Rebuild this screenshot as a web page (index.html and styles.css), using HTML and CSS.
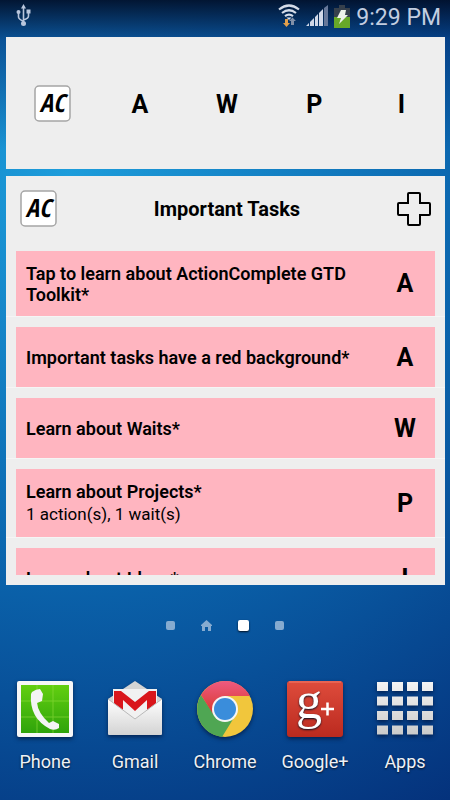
FILE: index.html
```
<!DOCTYPE html>
<html lang="en">
  <head>
    <title>Home screen</title>
    <meta charset="utf-8">
    <meta name="viewport" content="width=device-width, initial-scale=1.0">
    <link rel="stylesheet" href="styles.css">
  </head>
  <body>
    <header class="status-bar">
      <svg class="usb" width="16" height="24" viewBox="0 0 16 24" fill="none" stroke="#b9c6dc" stroke-width="1.6">
        <path d="M7.5 3v16M2.5 9v4q0 2 5 4.500M12.500 8v4q0 2.500-5 4"/>
        <g fill="#b9c6dc" stroke="none">
          <path d="M7.500 0l2.500 4.500h-5z"/>
          <circle cx="2.500" cy="8" r="2"/>
          <path d="M10.500 5.500h4v4h-4z"/>
          <circle cx="7.500" cy="19.500" r="2.500"/>
        </g>
      </svg>
      <div class="status-icons">
        <svg width="22" height="24" viewBox="0 0 22 24" fill="none" stroke="#d5dce8" stroke-width="2.200">
          <path d="M1 5.500q10-8 20 0M4 9q7-5.500 14 0M7 12.200q4-3 8 0"/>
          <path d="M8.500 13.500h5L11 16z" fill="#d5dce8" stroke="none"/>
          <path d="M7 15h3v4h2l-3.500 4L5 19h2z" fill="#e3a04c" stroke="none"/>
          <path d="M13 21h3v-4h2l-3.500-3.500L11 17h2z" fill="#8190a8" stroke="none"/>
        </svg>
        <svg width="22" height="22" viewBox="0 0 22 22" fill="#d0d8e8">
          <path d="M0 21l3-3v3zM4 17l4-4v8H4zM9 12l3-3v12H9zM13 8l4-4v17h-4z"/>
          <path d="M18 3l4-3v21h-4z" fill="#66789a"/>
        </svg>
        <svg width="16" height="23" viewBox="0 0 16 23">
          <path d="M0 3h5V0h6v3h5v10H0z" fill="#36404c"/>
          <path d="M0 12h16v11H0z" fill="#67a828"/>
          <path d="M7 5h5l-1 5h3L5 19l2-6H3z" fill="#eef2ea"/>
        </svg>
        <span class="clock">9:29 PM</span>
      </div>
    </header>

    <main>
      <nav class="widget shortcuts">
        <button class="logo" aria-label="ActionComplete">
          <svg width="37" height="37" viewBox="0 0 37 37">
            <rect x="1" y="1" width="35" height="35" rx="4" fill="#fff" stroke="#a5a5a5" stroke-width="1.500"/>
            <text x="18" y="27" text-anchor="middle" class="logo-text">AC</text>
          </svg>
        </button>
        <button class="letter">A</button>
        <button class="letter">W</button>
        <button class="letter">P</button>
        <button class="letter">I</button>
      </nav>

      <section class="widget tasks">
        <div class="tasks-head">
          <button class="logo" aria-label="ActionComplete">
            <svg width="37" height="37" viewBox="0 0 37 37">
              <rect x="1" y="1" width="35" height="35" rx="4" fill="#fff" stroke="#a5a5a5" stroke-width="1.500"/>
              <text x="18" y="27" text-anchor="middle" class="logo-text">AC</text>
            </svg>
          </button>
          <h1>Important Tasks</h1>
          <button class="add" aria-label="Add task">
            <svg width="34" height="34" viewBox="0 0 34 34" fill="none" stroke="#000" stroke-width="2">
              <path d="M12 1h10q1 0 1 1v9h9q1 0 1 1v10q0 1-1 1h-9v9q0 1-1 1H12q-1 0-1-1v-9H2q-1 0-1-1V12q0-1 1-1h9V2q0-1 1-1z"/>
            </svg>
          </button>
        </div>
        <ul class="task-list">
          <li>
            <div class="task">
              <div class="task-text"><h2>Tap to learn about ActionComplete GTD Toolkit*</h2></div>
              <span class="letter">A</span>
            </div>
          </li>
          <li>
            <div class="task">
              <div class="task-text"><h2>Important tasks have a red background*</h2></div>
              <span class="letter">A</span>
            </div>
          </li>
          <li>
            <div class="task">
              <div class="task-text"><h2>Learn about Waits*</h2></div>
              <span class="letter">W</span>
            </div>
          </li>
          <li>
            <div class="task">
              <div class="task-text"><h2>Learn about Projects*</h2><p>1 action(s), 1 wait(s)</p></div>
              <span class="letter">P</span>
            </div>
          </li>
          <li>
            <div class="task">
              <div class="task-text"><h2>Learn about Ideas*</h2></div>
              <span class="letter">I</span>
            </div>
          </li>
        </ul>
      </section>
    </main>

    <div class="pages">
      <span class="dot"></span>
      <svg width="11" height="11" viewBox="0 0 11 11" fill="#86abd0"><path d="M5.500 0L11 5v1h-1v5H7V7H4v4H1V6H0V5z"/></svg>
      <span class="dot current"></span>
      <span class="dot"></span>
    </div>

    <nav class="dock">
      <a href="#phone">
        <svg width="58" height="58" viewBox="0 0 58 58">
          <defs>
            <linearGradient id="green" x1="0" y1="0" x2="0" y2="1"><stop offset="0" stop-color="#62cf10"/><stop offset="1" stop-color="#2fa30b"/></linearGradient>
          </defs>
          <rect x="1" y="1" width="56" height="56" rx="2" fill="#f7f7f7"/>
          <path d="M5 5h48v48H5z" fill="url(#green)"/>
          <path d="M21 5v48M37 5v48M5 21h48M5 37h48" stroke="#8fdc3c" stroke-width="1" opacity=".6"/>
          <path d="M16 12q4-3 8-3l3 5-1 7-5 2q1 10 12 20l4-2 6 3 0 4q-4 3-9 1Q13 38 15 14z" fill="#f4f4f4"/>
        </svg>
        <span>Phone</span>
      </a>
      <a href="#gmail">
        <svg width="58" height="58" viewBox="0 0 58 58">
          <defs>
            <linearGradient id="paper" x1="0" y1="0" x2="0" y2="1"><stop offset="0" stop-color="#fff"/><stop offset="1" stop-color="#d3d3d3"/></linearGradient>
          </defs>
          <path d="M2 19L29 1l27 18v20H2z" fill="#d4d4d4"/>
          <path d="M7 9h44v35H7z" fill="#f1f1f1"/>
          <path d="M8 11h7l14 11 14-11h7v29h-9V20L29 31 17 20v20H8z" fill="#d9161b"/>
          <path d="M2 19l27 20 27-20v35q0 1-1 1H3q-1 0-1-1z" fill="url(#paper)"/>
          <path d="M2 19l27 20 27-20" fill="none" stroke="#b9b9b9" stroke-width="1"/>
        </svg>
        <span>Gmail</span>
      </a>
      <a href="#chrome">
        <svg width="58" height="58" viewBox="0 0 58 58">
          <defs>
            <linearGradient id="red" x1="0" y1="0" x2="0" y2="1"><stop offset="0" stop-color="#ed5a80"/><stop offset="1" stop-color="#d9382c"/></linearGradient>
          </defs>
          <circle cx="29" cy="29" r="28" fill="#f1c63c"/>
          <path d="M5 15A28 28 0 0 0 26 57L39 36 29 29 15 30z" fill="#4fa653"/>
          <path d="M5 15A28 28 0 0 1 54 16H29L17 34z" fill="url(#red)"/>
          <circle cx="29" cy="29" r="13" fill="#f6f6f6"/>
          <circle cx="29" cy="29" r="11" fill="#3a8ddb"/>
        </svg>
        <span>Chrome</span>
      </a>
      <a href="#google-plus">
        <svg width="58" height="58" viewBox="0 0 58 58">
          <defs>
            <linearGradient id="brick" x1="0" y1="0" x2="0" y2="1"><stop offset="0" stop-color="#de4c3c"/><stop offset="1" stop-color="#bb2a1f"/></linearGradient>
          </defs>
          <rect x="1" y="1" width="56" height="56" rx="3" fill="url(#brick)"/>
          <path d="M3 2h52" stroke="#f17c6c"/>
          <text x="10" y="38" class="g-letter">g</text>
          <path d="M35 29h13M41.500 22.500v13" stroke="#fff" stroke-width="2.500"/>
        </svg>
        <span>Google+</span>
      </a>
      <a href="#apps">
        <svg width="58" height="58" viewBox="0 0 58 58">
          <defs>
            <linearGradient id="steel" gradientUnits="userSpaceOnUse" x1="0" y1="0" x2="0" y2="58"><stop offset="0" stop-color="#f5f5f5"/><stop offset="1" stop-color="#c8c8c8"/></linearGradient>
          </defs>
          <path stroke="url(#steel)" stroke-width="9" stroke-dasharray="11 4" d="M1 6.500h56M1 21h56M1 35.500h56M1 50h56"/>
        </svg>
        <span>Apps</span>
      </a>
    </nav>
  </body>
</html>
```
FILE: styles.css
```
* {
  box-sizing: border-box;
}

body {
  margin: 0;
  min-height: 100vh;
  display: flex;
  flex-direction: column;
  font-family: Roboto, "Liberation Sans", sans-serif;
  color: #000;
  background:
    linear-gradient(rgba(0, 10, 35, 0.9), rgba(0, 30, 100, 0.5) 40px, transparent 150px),
    radial-gradient(ellipse 170% 92% at 15% 22%, #1d9ddb, #0b68b0 50%, #04307a);
}

h1, h2, p, ul {
  margin: 0;
  padding: 0;
}

button {
  border: 0;
  padding: 0;
  background: none;
  color: inherit;
  font-family: inherit;
}

svg {
  display: block;
}

.status-bar {
  display: flex;
  justify-content: space-between;
  align-items: center;
  height: 37px;
  padding: 0 9px 5px 16px;
}

.status-icons {
  display: flex;
  align-items: center;
  gap: 6px;
}

.clock {
  padding-top: 3px;
  font-size: 23px;
  line-height: 28px;
  color: #c2cde0;
}

main {
  display: flex;
  flex-direction: column;
  gap: 7px;
  padding: 0 5px 0 6px;
}

.widget {
  background: #eee;
}

.shortcuts {
  display: grid;
  grid-template-columns: repeat(5, 1fr);
  align-items: center;
  justify-items: center;
  height: 132px;
  padding-left: 3px;
}

.letter {
  font-size: 25px;
  line-height: 28px;
  font-weight: 700;
  text-align: center;
}

.shortcuts .letter {
  padding-top: 3px;
}

.logo-text {
  font-family: "Open Sans Condensed", "Roboto Condensed", "DejaVu Sans Condensed", "Liberation Sans", sans-serif;
  font-size: 25px;
  font-weight: 700;
  font-style: italic;
}

.tasks {
  padding-bottom: 10px;
}

.tasks-head {
  display: flex;
  align-items: center;
  justify-content: space-between;
  height: 75px;
  padding: 0 14px 10px 14px;
}

.tasks-head h1 {
  font-size: 20px;
  line-height: 24px;
}

.task-list {
  list-style: none;
  height: 324px;
  overflow: hidden;
}

.task-list li {
  padding: 0 10px;
  margin-bottom: 10px;
  border-bottom: 1px solid #f5f5f5;
}

.task {
  display: flex;
  align-items: center;
  min-height: 60px;
  padding: 12px 10px 11px;
  background: #ffb5c0;
}

.task-text {
  flex: 1;
}

.task h2 {
  font-size: 18px;
  line-height: 21px;
  font-weight: 600;
}

.task p {
  font-size: 17px;
  line-height: 24px;
}

.task .letter {
  width: 40px;
}

.pages {
  display: flex;
  justify-content: center;
  align-items: center;
  gap: 26px;
  height: 80px;
}

.dot {
  width: 9px;
  height: 9px;
  border-radius: 2px;
  background: #86abd0;
}

.dot.current {
  width: 11px;
  height: 11px;
  background: #fff;
  box-shadow: 0 1px 2px #012;
}

.dock {
  display: grid;
  grid-template-columns: repeat(5, 1fr);
  margin-top: 15px;
}

.dock a {
  display: flex;
  flex-direction: column;
  align-items: center;
  gap: 13px;
  color: #eef1f6;
  font-size: 18px;
  line-height: 22px;
  text-decoration: none;
  text-shadow: 0 1px 2px #012;
}

.dock svg {
  filter: drop-shadow(0 2px 2px rgba(0, 10, 40, 0.6));
}

.g-letter {
  font-family: "Liberation Serif", serif;
  font-size: 52px;
  fill: #fff;
}
```
